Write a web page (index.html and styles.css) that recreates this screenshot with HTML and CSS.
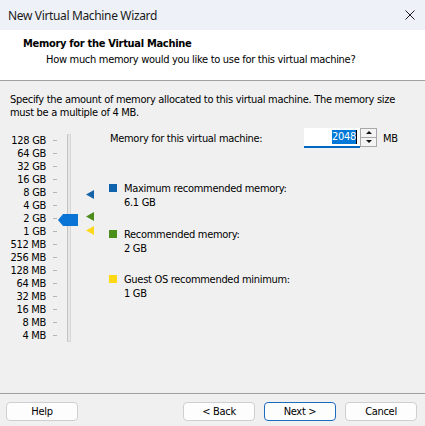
FILE: index.html
```html
<!DOCTYPE html>
<html lang="en">
<head>
    <meta charset="UTF-8">
    <meta name="viewport" content="width=device-width, initial-scale=1.0">
    <title>New Virtual Machine Wizard</title>
    <link rel="stylesheet" href="styles.css">
</head>
<body>
    <div class="window">
        <div class="titlebar">
            <span class="caption">New Virtual Machine Wizard</span>
            <svg class="close" width="10" height="10" viewBox="0 0 10 10">
                <path d="M0.5 0.5 L9.5 9.5 M9.5 0.5 L0.5 9.5" stroke="#1c1c1c" stroke-width="1" fill="none"/>
            </svg>
        </div>

        <div class="header">
            <h1>Memory for the Virtual Machine</h1>
            <p>How much memory would you like to use for this virtual machine?</p>
        </div>

        <div class="content">
            <p class="intro">Specify the amount of memory allocated to this virtual machine. The memory size must be a multiple of 4 MB.</p>

            <div class="memory">
                <div class="scale">
                    <ul class="labels">
                        <li>128 GB</li>
                        <li>64 GB</li>
                        <li>32 GB</li>
                        <li>16 GB</li>
                        <li>8 GB</li>
                        <li>4 GB</li>
                        <li>2 GB</li>
                        <li>1 GB</li>
                        <li>512 MB</li>
                        <li>256 MB</li>
                        <li>128 MB</li>
                        <li>64 MB</li>
                        <li>32 MB</li>
                        <li>16 MB</li>
                        <li>8 MB</li>
                        <li>4 MB</li>
                    </ul>
                    <div class="track">
                        <svg class="thumb" width="20" height="12" viewBox="0 0 20 12">
                            <polygon points="0,6 5,0 20,0 20,12 5,12" fill="#0a74d6"/>
                        </svg>
                    </div>
                    <div class="markers">
                        <svg class="marker max" width="8" height="9" viewBox="0 0 8 9"><polygon points="0,4.5 8,0 8,9" fill="#1664a8"/></svg>
                        <svg class="marker rec" width="8" height="9" viewBox="0 0 8 9"><polygon points="0,4.5 8,0 8,9" fill="#4b8c1c"/></svg>
                        <svg class="marker min" width="8" height="9" viewBox="0 0 8 9"><polygon points="0,4.5 8,0 8,9" fill="#fcd81c"/></svg>
                    </div>
                </div>

                <div class="details">
                    <div class="amount">
                        <label for="memSize">Memory for this virtual machine:</label>
                        <div class="field"><span class="selected">2048</span><span class="caret"></span></div>
                        <div class="spin">
                            <span class="up"></span>
                            <span class="down"></span>
                        </div>
                        <span class="unit">MB</span>
                    </div>

                    <ul class="legend">
                        <li>
                            <span class="swatch blue"></span>
                            <div>Maximum recommended memory:<br>6.1 GB</div>
                        </li>
                        <li>
                            <span class="swatch green"></span>
                            <div>Recommended memory:<br>2 GB</div>
                        </li>
                        <li>
                            <span class="swatch yellow"></span>
                            <div>Guest OS recommended minimum:<br>1 GB</div>
                        </li>
                    </ul>
                </div>
            </div>
        </div>

        <div class="footer">
            <button>Help</button>
            <div class="nav">
                <button>&lt; Back</button>
                <button class="default">Next &gt;</button>
                <button>Cancel</button>
            </div>
        </div>
    </div>
</body>
</html>
```

FILE: styles.css
```css
body {
    margin: 0;
    font-family: "DejaVu Sans Condensed", "Liberation Sans", sans-serif;
    font-size: 11px;
    letter-spacing: -0.3px;
    color: #000;
    background: #f0f0f0;
}
.window {
    width: 425px;
    height: 426px;
    display: flex;
    flex-direction: column;
    background: #f0f0f0;
}
.titlebar {
    height: 30px;
    flex: none;
    display: flex;
    align-items: center;
    justify-content: space-between;
    padding: 0 10px 0 8px;
    background: #eef2f8;
    font-family: "Noto Sans", sans-serif;
    font-size: 12px;
    letter-spacing: -0.35px;
    color: #1a1a1a;
}
.header {
    height: 51px;
    flex: none;
    box-sizing: border-box;
    background: #fff;
    border-bottom: 1px solid #a0a0a0;
    padding: 7px 0 0 23px;
}
.header h1 {
    margin: 0;
    font-size: 11px;
    font-weight: bold;
    line-height: 14px;
}
.header p {
    margin: 2px 0 0 23px;
    line-height: 14px;
}
.content {
    flex: 1;
    padding: 12px 10px 0 10px;
}
.intro {
    margin: 0;
    line-height: 13px;
}
.memory {
    display: flex;
    align-items: flex-start;
    margin-top: 15px;
}

/* slider */
.scale {
    display: flex;
    position: relative;
}
.labels {
    list-style: none;
    margin: 0;
    padding: 0;
}
.labels li {
    display: flex;
    align-items: center;
    justify-content: flex-end;
    height: 13px;
    width: 47px;
    white-space: nowrap;
}
.labels li::after {
    content: "";
    flex: none;
    width: 4px;
    height: 1px;
    margin-left: 7px;
    background: #b4b4b4;
}
.track {
    position: relative;
    width: 2px;
    margin-left: 10px;
    border: 1px solid #d8d8d8;
    border-left-color: #c4c4c4;
    background: #e6e6e6;
}
.thumb {
    position: absolute;
    left: -10px;
    top: 79px;
}
.markers {
    position: relative;
    width: 39px;
}
.marker {
    position: absolute;
    left: 15px;
}
.marker.max { top: 56px; }
.marker.rec { top: 78px; }
.marker.min { top: 92px; }

/* amount field and legend */
.details {
    margin-top: -6px;
}
.amount {
    display: flex;
    align-items: center;
    height: 20px;
}
.amount label {
    width: 194px;
}
.field {
    width: 56px;
    height: 20px;
    box-sizing: border-box;
    background: #fff;
    border-bottom: 2px solid #0067c0;
    display: flex;
    justify-content: flex-end;
    align-items: center;
    padding-right: 3px;
}
.selected {
    background: #0078d7;
    color: #fff;
    line-height: 14px;
}
.caret {
    width: 1px;
    height: 14px;
    background: #000;
}
.spin {
    display: flex;
    flex-direction: column;
    margin-top: -1px;
    width: 17px;
}
.spin span {
    height: 10px;
    box-sizing: border-box;
    border: 1px solid #a8a8a8;
    background: #f4f4f4;
    position: relative;
}
.spin .down {
    border-top: none;
    height: 9px;
}
.spin span::after {
    content: "";
    position: absolute;
    left: 5px;
    width: 0;
    height: 0;
    border-left: 3px solid transparent;
    border-right: 3px solid transparent;
}
.spin .up::after {
    top: 2px;
    border-bottom: 3px solid #111;
}
.spin .down::after {
    top: 2px;
    border-top: 3px solid #111;
}
.unit {
    margin-left: 6px;
}
.legend {
    list-style: none;
    margin: 34px 0 0 -1px;
    padding: 0;
}
.legend li {
    display: flex;
    align-items: flex-start;
    line-height: 14px;
    margin-bottom: 17.5px;
}
.swatch {
    width: 8px;
    height: 8px;
    margin: 2px 7px 0 0;
    flex: none;
}
.swatch.blue { background: #0f63ad; }
.swatch.green { background: #4a8f1c; }
.swatch.yellow { background: #ffd815; }

/* buttons */
.footer {
    height: 33px;
    flex: none;
    box-sizing: border-box;
    border-top: 1px solid #a0a0a0;
    display: flex;
    justify-content: space-between;
    padding: 8px 8px 0 6px;
}
.nav {
    display: flex;
    gap: 9px;
}
button {
    width: 72px;
    height: 19px;
    padding: 0;
    font-family: inherit;
    font-size: 11px;
    letter-spacing: inherit;
    color: #000;
    background: #fdfdfd;
    border: 1px solid #cfcfcf;
    border-radius: 4px;
}
button.default {
    border-color: #1a6cc0;
}
```
